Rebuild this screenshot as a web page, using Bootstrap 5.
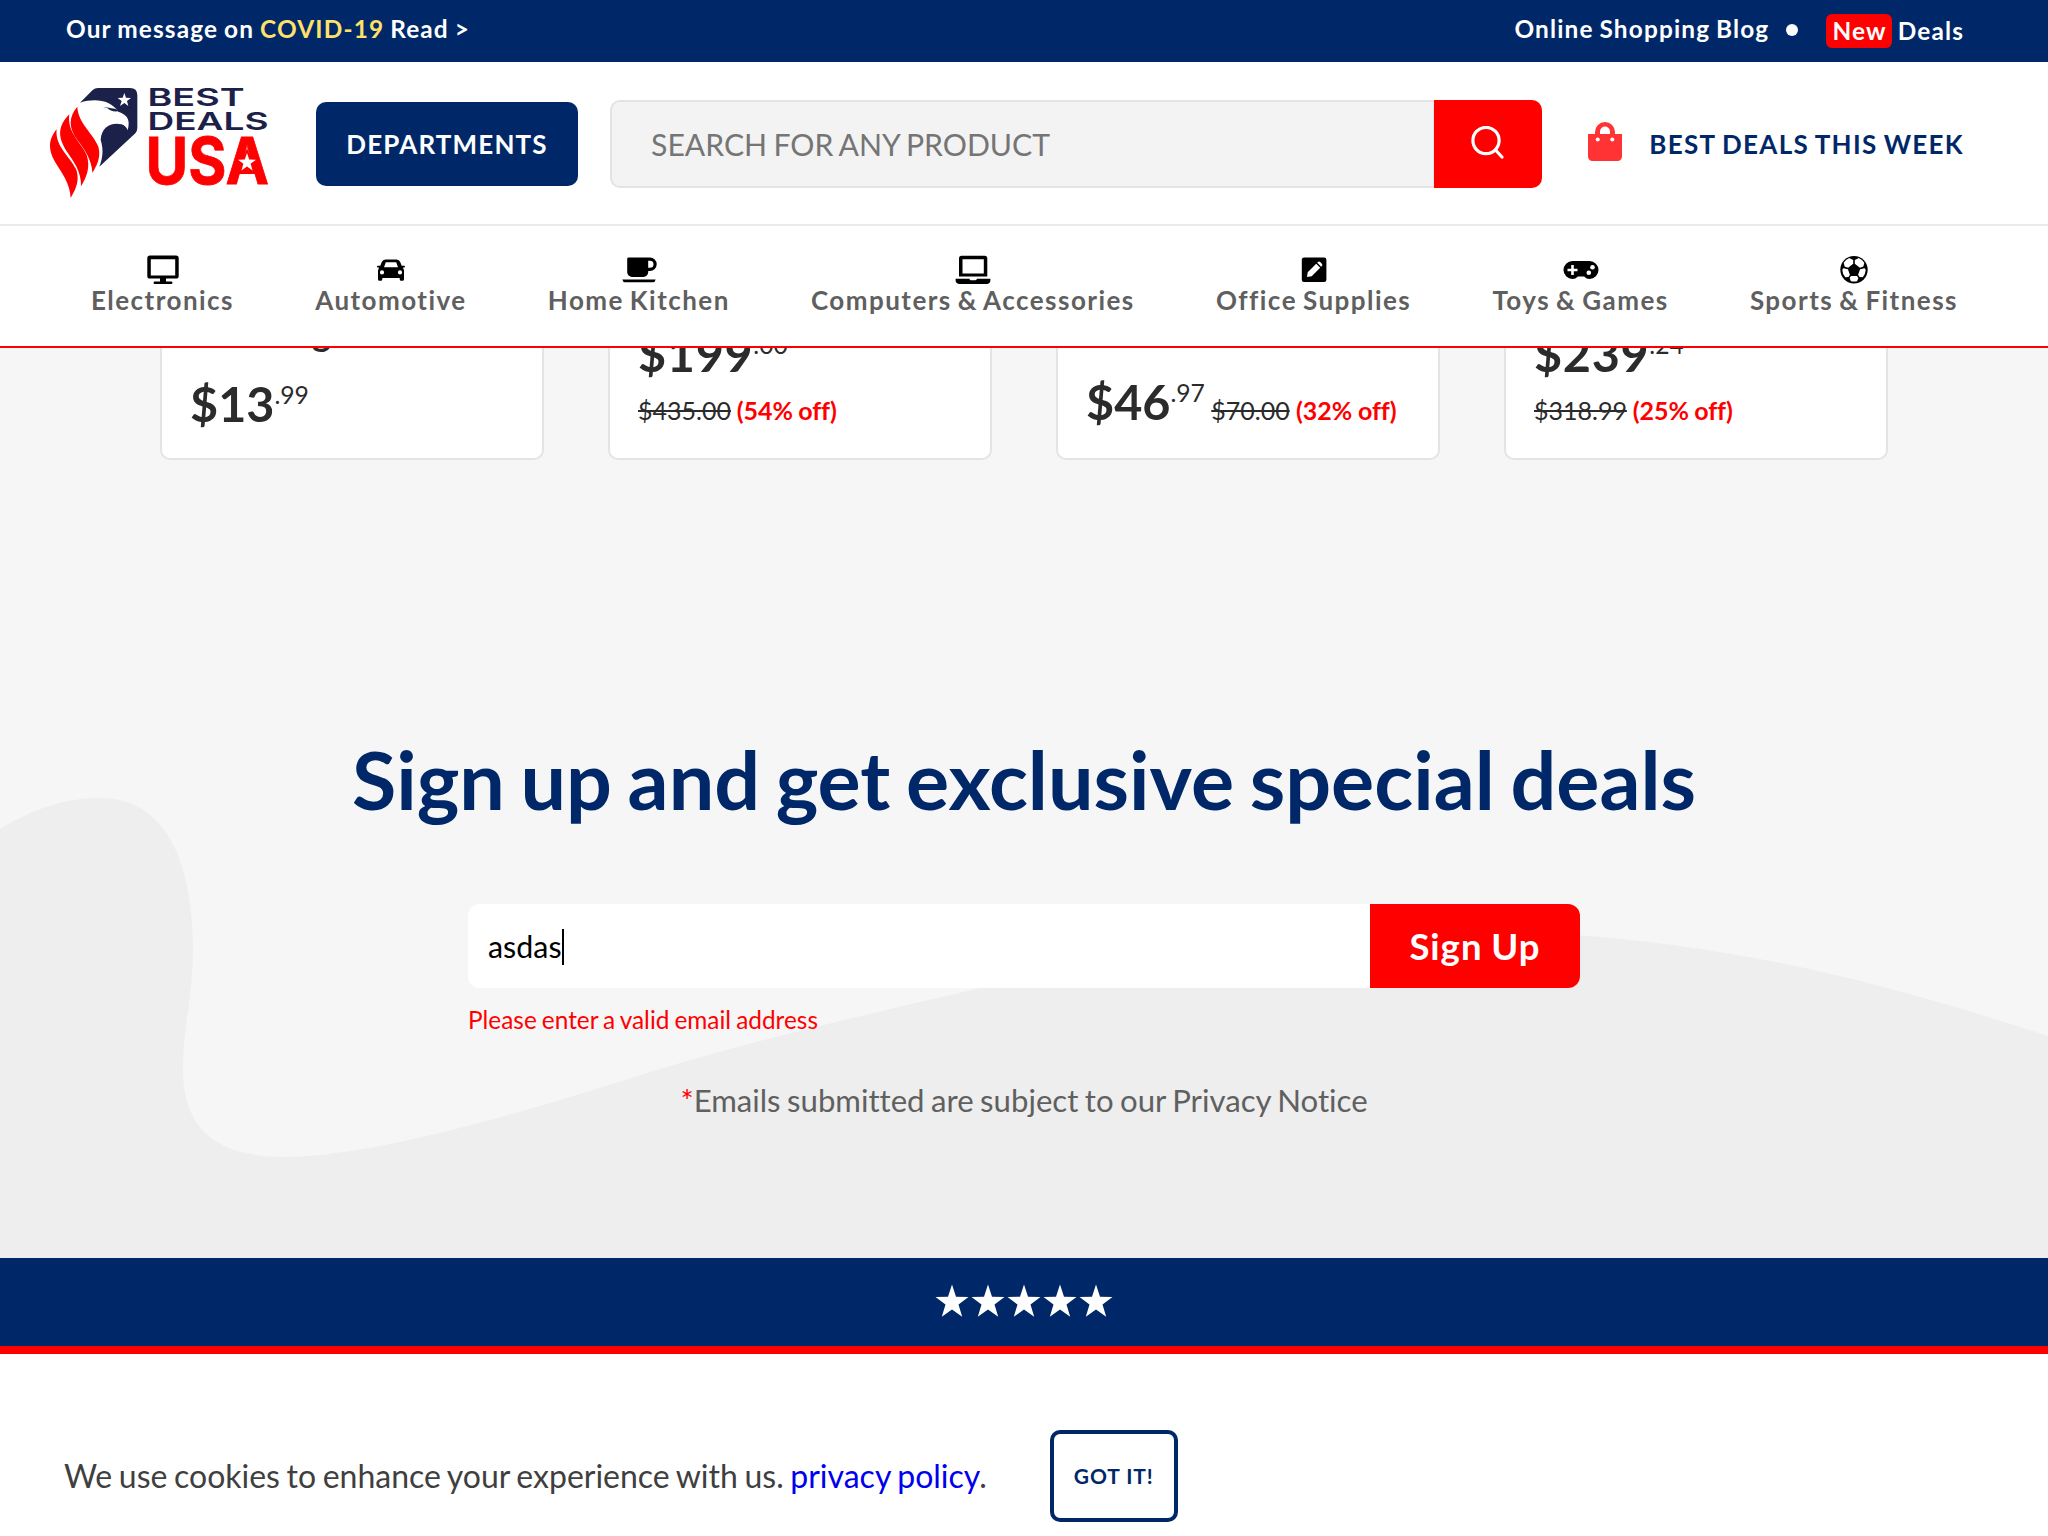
<!DOCTYPE html>
<html lang="en">
<head>
<meta charset="utf-8">
<meta name="viewport" content="width=device-width, initial-scale=1">
<title>Best Deals USA</title>
<link href="https://cdn.jsdelivr.net/npm/bootstrap@5.3.0/dist/css/bootstrap.min.css" rel="stylesheet">
<style>
:root{--navy:#002868;--red:#ff0000}
body{font-family:Lato,"Liberation Sans",sans-serif;background:#fff;color:#2b2b2b;overflow:hidden;height:1536px;font-variant-ligatures:none}
a{text-decoration:none;color:inherit}
.topbar{height:62px;background:var(--navy);color:#fff;font-size:24.4px;line-height:30px;font-weight:700;letter-spacing:1.15px;word-spacing:-1.2px;padding:14px 84px 0 66px}
.covid{color:#ffe169}
.dot{width:12px;height:12px;border-radius:50%;background:#fff;margin:10px 28px 0 17px}
.new-tag{background:var(--red);border-radius:6px;height:34px;line-height:34px;padding:0 5px 0 6px;margin-right:6px}
.new-deals{line-height:34px}
.brandbar{height:164px;border-bottom:2px solid #eaeaea;padding:2px 84px 0 48px}
.dept{width:262px;height:84px;background:var(--navy);color:#fff;border-radius:10px;font-size:26px;font-weight:700;letter-spacing:1.15px;margin-left:46px}
.searchbox{width:932px;height:88px;margin-left:32px}
.searchbox .field{background:#f3f3f3;border:2px solid #e3e3e3;border-right-width:1px;border-radius:10px 0 0 10px;font-size:30.2px;word-spacing:-1.5px;color:#757575;padding:2px 0 0 39px}
.searchbox .go{width:108px;background:var(--red);border-radius:0 10px 10px 0}
.week{color:var(--navy);font-size:26px;font-weight:700;letter-spacing:1.3px;word-spacing:-1.2px}
.week svg{margin:0 27px 5px 0}
.cats{height:122px;border-bottom:2px solid var(--red);padding:25px 90px 0 91px;background:#fff}
.cats a{font-size:26px;font-weight:700;letter-spacing:1.46px;word-spacing:-1.8px;line-height:26px;color:#5f5f5f}
.cats svg{display:block;width:36px;height:36px;fill:#000}
.main-area{height:910px;background:#f6f6f6;position:relative;overflow:hidden}
.wave{position:absolute;left:0;top:0;z-index:0}
.products{height:112px;gap:64px;overflow:hidden;position:relative}
.deal{width:384px;height:200px;background:#fff;border:2px solid #e4e4e4;border-radius:10px;padding:0 28px}
.price{font-size:48.5px;font-weight:700;line-height:60px;padding-bottom:1px;white-space:nowrap}
.price-line{padding-bottom:3px}
.price-wide{letter-spacing:.7px}
.cents{font-size:24.7px;font-weight:400;line-height:0;letter-spacing:0;vertical-align:18.5px}
.was{font-size:25px;font-weight:400;line-height:0}
.off{font-size:25px;font-weight:700;line-height:0;color:var(--red);letter-spacing:-.1px}
.sub{line-height:48px;font-size:25px;margin-top:2px;word-spacing:-.5px}
.gname{font-size:36px;font-weight:700;line-height:43px;margin:0 0 19px 122px}
.signup{position:relative;padding-top:271px}
.signup h2{font-size:80.8px;line-height:96px;font-weight:700;word-spacing:-4px;color:var(--navy);margin:0;text-align:center}
.mailform{width:1112px;margin:77px auto 0}
.mailrow{height:84px}
.mailrow .field{background:#fff;border-radius:12px 0 0 12px;font-size:30.4px;color:#000;padding:1px 0 0 20px}
.caret{width:2px;height:36px;background:#000}
.mailrow .send{width:210px;background:var(--red);color:#fff;border-radius:0 12px 12px 0;font-size:36.5px;font-weight:700;letter-spacing:1px;word-spacing:-1px}
.err{font-size:24.4px;line-height:30px;margin-top:17px;word-spacing:-1.2px;color:var(--red)}
.note{font-size:31.15px;line-height:40px;margin-top:45px;word-spacing:-1.5px;color:#606060}
.star-note{color:var(--red)}
.starbar{height:96px;background:var(--navy);border-bottom:8px solid var(--red);padding-bottom:2px}
.cookie{padding:76px 0 0 64px;font-size:32px;word-spacing:-1.6px;color:#3f3f3f}
.cookie a{color:#0000ee}
.gotit{width:128px;height:92px;border:4px solid var(--navy);border-radius:10px;background:#fff;color:var(--navy);font-size:21px;font-weight:700;letter-spacing:.9px;margin-left:63px}
</style>
</head>
<body>
<header>
  <div class="topbar d-flex justify-content-between">
    <div>Our message on <span class="covid">COVID-19</span> Read &gt;</div>
    <div class="d-flex align-items-start">
      <a href="#">Online Shopping Blog</a>
      <span class="dot"></span>
      <a href="#" class="new-deals d-flex"><span class="new-tag">New</span><span>Deals</span></a>
    </div>
  </div>
  <div class="brandbar d-flex align-items-center">
    <a href="#" aria-label="Best Deals USA">
      <svg width="222" height="112" viewBox="0 0 222 112" class="d-block">
        <g transform="translate(-8 -8) scale(.33333)">
          <path fill="#1c2149" d="M120 68 158 30q7-6 16-6h96q22 0 22 22v98q0 9-6 16L178 260c9-22 14-48 4-80 2-38 31-54 62-47q14 4 19 18c7-29 3-45-28-56-22-33-67-42-115-27z"/>
          <path fill="#1c2149" d="M189 81c16 3 34 2 50 12-16 4-30-1-36-8z"/>
          <path fill="#fff" d="m253 39 5 14 15 1-12 9 4 15-12-9-13 9 5-15-12-9 15-1z"/>
          <g fill="#f00">
            <path d="M112 80c2 50 48 80 63 120 8 28-2 54-18 78-1-38-25-72-45-98-27-37-26-70 0-100z"/>
            <path d="M88 103c-8 54 34 82 52 122 12 36 0 66-17 94 2-44-22-74-42-104-32-48-24-80 7-112z"/>
            <path d="M50 147c-6 50 36 78 58 120 12 34 0 60-16 87-2-44-26-74-48-110-24-44-14-70 6-97z"/>
          </g>
        </g>
        <g font-family="Inter,sans-serif" fill="#1c2149" font-weight="600" font-size="24.500">
          <text x="99.500" y="18.300" textLength="97" lengthAdjust="spacingAndGlyphs">BEST</text>
          <text x="99.500" y="41.700" textLength="121" lengthAdjust="spacingAndGlyphs">DEALS</text>
        </g>
        <text x="97.500" y="96" font-family="Inter,sans-serif" font-weight="700" font-size="65" stroke="#f00" stroke-width=".8" fill="#f00" textLength="123.500" lengthAdjust="spacingAndGlyphs">USA</text>
        <path fill="#f00" d="m199 60 10 26h-20z"/>
        <path fill="#fff" d="m199 65 2.200 6.500 6.800.200-5.400 4.100 2 6.600-5.600-3.900-5.600 3.900 2-6.600-5.400-4.100 6.800-.200z"/>
      </svg>
    </a>
    <button class="dept btn p-0">DEPARTMENTS</button>
    <div class="searchbox d-flex">
      <div class="field flex-grow-1 d-flex align-items-center">SEARCH FOR ANY PRODUCT</div>
      <div class="go d-flex align-items-center justify-content-center">
        <svg width="36" height="36" viewBox="0 0 36 36" fill="none" stroke="#fff" stroke-width="3.200" stroke-linecap="round"><circle cx="16" cy="14.500" r="13.100"/><path d="m25.500 24 6.500 7"/></svg>
      </div>
    </div>
    <a href="#" class="week d-flex align-items-center ms-auto">
      <svg width="34" height="40" viewBox="0 0 34 40"><path fill="#f33" d="M0 12h7V10a10 10 0 0 1 20 0v2h7v22.500a4.500 4.500 0 0 1-4.500 4.500h-25A4.500 4.500 0 0 1 0 34.500zM12 12h10V9.500a5 5 0 0 0-10 0z"/><circle cx="9.700" cy="17.500" r="2" fill="#fff"/><circle cx="24.300" cy="17.500" r="2" fill="#fff"/></svg>
      <span>BEST DEALS THIS WEEK</span>
    </a>
  </div>
  <nav class="cats d-flex justify-content-between">
    <a href="#" class="d-flex flex-column align-items-center"><svg viewBox="0 0 36 36"><path fill-rule="evenodd" d="M5 4.600h26a2.700 2.700 0 0 1 2.700 2.700v17.600a2.700 2.700 0 0 1-2.700 2.700H21V30.500h5.200a1.200 1.200 0 0 1 0 2.500H9.800a1.200 1.200 0 0 1 0-2.500H15v-2.900H5a2.700 2.700 0 0 1-2.700-2.700V7.300A2.700 2.700 0 0 1 5 4.600zM5.800 8.200v16.200h24.400V8.200z"/></svg>Electronics</a>
    <a href="#" class="d-flex flex-column align-items-center"><svg viewBox="0 0 36 36"><path fill-rule="evenodd" d="M12.500 8.500h11a4 4 0 0 1 3.700 2.600l1.500 3.600h2.500q.8 0 .8.900t-.8.900h-1.300l.6 1.400q.5 1 .5 2V28.300q0 1.500-1.500 1.500h-1.300q-1.500 0-1.500-1.500V27H9.300v1.300q0 1.500-1.500 1.500H6.500Q5 29.800 5 28.300V19.900q0-1 .5-2l.6-1.400H4.800q-.8 0-.8-.9t.8-.9h2.500l1.500-3.600a4 4 0 0 1 3.700-2.600zM12.800 11.300 11 16.300h14l-1.800-5zM9 19.300a2.100 2.100 0 1 0 0 4.200 2.100 2.100 0 0 0 0-4.200zm18 0a2.100 2.100 0 1 0 0 4.200 2.100 2.100 0 0 0 0-4.200z"/></svg>Automotive</a>
    <a href="#" class="d-flex flex-column align-items-center"><svg viewBox="0 0 36 36"><path fill-rule="evenodd" d="M7.500 6.500H29a6.700 6.700 0 0 1 0 13.400h-1.800v1.300a4.800 4.800 0 0 1-4.800 4.800H11a4.800 4.800 0 0 1-4.800-4.800V7.800q0-1.300 1.300-1.300zM27.200 9.700v7H29a3.500 3.500 0 0 0 0-7zM1.300 28.500h33.400q-.6 2.700-2.700 2.700H4q-2.100 0-2.700-2.700z"/></svg>Home Kitchen</a>
    <a href="#" class="d-flex flex-column align-items-center"><svg viewBox="0 0 36 36"><path fill-rule="evenodd" d="M6.500 4.800h23.200q2.600 0 2.600 2.600v18H4V7.400q0-2.600 2.500-2.600zM7.500 8.300v14.200h21.300V8.300zM.6 27.700h13.800q.3 1.600 1.800 1.600h3.900q1.500 0 1.800-1.600h13.500v1.400q0 3.800-3.200 3.800H4q-3.400 0-3.400-3.800z"/></svg>Computers &amp; Accessories</a>
    <a href="#" class="d-flex flex-column align-items-center"><svg viewBox="0 0 36 36"><rect x="5.800" y="6.500" width="24.600" height="24.600" rx="2.300"/><path fill="#fff" d="m11 26 .7-4.800 8.500-8.500 4 4-8.500 8.500zM21.200 11.700l.7-.7q1.200-1 2.300 0l1.700 1.700q1 1.200 0 2.300l-.7.700z"/></svg>Office Supplies</a>
    <a href="#" class="d-flex flex-column align-items-center"><svg viewBox="0 0 36 36"><path d="M9.500 10h17a9 9 0 0 1 0 18q-3 0-5.400-2.600h-6.200Q12.500 28 9.500 28a9 9 0 0 1 0-18z"/><path fill="#fff" d="M8.200 14h2.600v3.700h3.700v2.600h-3.700V24H8.200v-3.700H4.500v-2.600h3.700z"/><circle cx="25.800" cy="21.800" r="2.300" fill="#fff"/><circle cx="29.500" cy="16.300" r="2.300" fill="#fff"/></svg>Toys &amp; Games</a>
    <a href="#" class="d-flex flex-column align-items-center"><svg viewBox="0 0 36 36"><circle cx="18" cy="18.800" r="13.700"/><g fill="#fff"><path d="m17.200 9-4-2q-3.600 1.700-5.500 4.700l.9 3.800 3.500 1.200 5.100-3.900z"/><path d="m18.800 9 4-2q3.600 1.700 5.500 4.700l-.9 3.800-3.500 1.200-5.100-3.900z"/><path d="m7.600 17.200-.6.200-.7 1.500q.3 4.500 2.900 7.400l3.300-.3 1.400-2.200-2-5.600z"/><path d="m28.400 17.200.6.200.7 1.500q-.3 4.500-2.900 7.400l-3.300-.3-1.400-2.200 2-5.600z"/><path d="M15 25h6l1.400 2-1.300 3.200q-3 .8-6.200 0L13.600 27z"/></g></svg>Sports &amp; Fitness</a>
  </nav>
</header>
<main class="main-area">
  <svg class="wave" width="2048" height="910" viewBox="0 348 2048 910"><path fill="#eee" d="M0 829C36 807 68 798 100 798c70 0 93 72 93 150 0 50-10 78-10 122 0 52 26 87 101 87C370 1157 520 1114 653 1071 780 1033 880 1012 980 988 1160 950 1400 918 1560 934c190 12 340 54 488 102v222H0z"/></svg>
  <section class="products d-flex justify-content-center align-items-end">
    <article class="deal d-flex flex-column justify-content-end pb-4">
      <div class="gname">g</div>
      <div class="price">$13<span class="cents">.99</span></div>
    </article>
    <article class="deal d-flex flex-column justify-content-end pb-4">
      <div class="price price-wide">$199<span class="cents">.00</span></div>
      <div class="sub"><s class="was">$435.00</s> <span class="off">(54% off)</span></div>
    </article>
    <article class="deal d-flex flex-column justify-content-end pb-4">
      <div class="price price-line">$46<span class="cents">.97</span><span class="was"> <s>$70.00</s> </span><span class="off">(32% off)</span></div>
    </article>
    <article class="deal d-flex flex-column justify-content-end pb-4">
      <div class="price price-wide">$239<span class="cents">.24</span></div>
      <div class="sub"><s class="was">$318.99</s> <span class="off">(25% off)</span></div>
    </article>
  </section>
  <section class="signup">
    <h2>Sign up and get exclusive special deals</h2>
    <form class="mailform">
      <div class="mailrow d-flex">
        <div class="field flex-grow-1 d-flex align-items-center"><span>asdas</span><span class="caret"></span></div>
        <button type="button" class="send btn p-0">Sign Up</button>
      </div>
      <div class="err">Please enter a valid email address</div>
    </form>
    <p class="note mb-0 text-center"><span class="star-note">*</span>Emails submitted are subject to our Privacy Notice</p>
  </section>
</main>
<div class="starbar d-flex justify-content-center align-items-center">
  <svg width="180" height="34" viewBox="0 0 180 34" fill="#fff"><defs><path id="star" d="m18 .5 4 12.300 12.500.200-10 7.600 3.700 12.200L18 25.500 7.800 32.800l3.700-12.200-10-7.600 12.500-.2z"/></defs><use href="#star"/><use href="#star" x="36"/><use href="#star" x="72"/><use href="#star" x="108"/><use href="#star" x="144"/></svg>
</div>
<footer class="cookie d-flex align-items-center">
  <div>We use cookies to enhance your experience with us. <a href="#">privacy policy</a>.</div>
  <button class="gotit btn p-0">GOT IT!</button>
</footer>
<script src="https://cdn.jsdelivr.net/npm/bootstrap@5.3.0/dist/js/bootstrap.bundle.min.js"></script>
</body>
</html>
